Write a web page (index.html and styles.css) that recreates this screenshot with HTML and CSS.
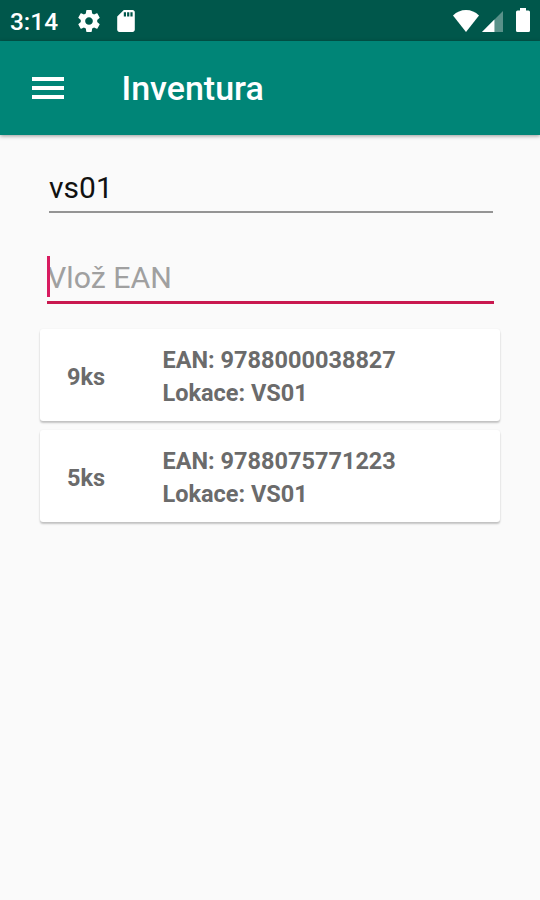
FILE: index.html
```html
<!DOCTYPE html>
<html lang="cs">
<head>
  <meta charset="UTF-8">
  <title>Inventura</title>
  <link rel="stylesheet" href="styles.css">
</head>
<body>
  <div class="status-bar">
    <span class="time">3:14</span>
    <svg class="icon-gear" viewBox="2 2 20 20" fill="#fff"><path d="M19.43 12.98c.04-.32.07-.64.07-.98s-.03-.66-.07-.98l2.11-1.65c.19-.15.24-.42.12-.64l-2-3.46c-.12-.22-.39-.3-.61-.22l-2.49 1c-.52-.4-1.08-.73-1.69-.98l-.38-2.65C14.46 2.18 14.25 2 14 2h-4c-.25 0-.46.18-.49.42l-.38 2.65c-.61.25-1.17.59-1.69.98l-2.49-1c-.23-.09-.49 0-.61.22l-2 3.46c-.13.22-.07.49.12.64l2.11 1.65c-.04.32-.07.65-.07.98s.03.66.07.98l-2.11 1.65c-.19.15-.24.42-.12.64l2 3.46c.12.22.39.3.61.22l2.49-1c.52.4 1.08.73 1.69.98l.38 2.65c.03.24.24.42.49.42h4c.25 0 .46-.18.49-.42l.38-2.65c.61-.25 1.17-.59 1.69-.98l2.49 1c.23.09.49 0 .61-.22l2-3.46c.12-.22.07-.49-.12-.64l-2.11-1.65zM12 15.5c-1.93 0-3.5-1.57-3.5-3.5s1.57-3.5 3.5-3.5 3.5 1.57 3.5 3.5-1.57 3.5-3.5 3.5z"/></svg>
    <svg class="icon-sd" viewBox="4 2 16 20" fill="#fff"><path d="M18 2h-8L4.02 8 4 20c0 1.100.9 2 2 2h12c1.100 0 2-.9 2-2V4c0-1.100-.9-2-2-2zm-6 6h-2V4h2v4zm3 0h-2V4h2v4zm3 0h-2V4h2v4z"/></svg>
    <div class="status-right">
      <svg class="icon-wifi" viewBox="0 0 26 22" fill="#fff"><path d="M13 22L0 5.500Q5.500 0 13 0T26 5.500z"/></svg>
      <svg class="icon-signal" viewBox="0 0 22 22" fill="#fff"><path d="M0 22L22 0v22z" fill-opacity=".35"/><path d="M0 22L13 9v13z"/></svg>
      <svg class="icon-battery" viewBox="0 0 14 24" fill="#fff"><path d="M4 0h6v2.500h2.500Q14 2.500 14 4v18.500q0 1.500-1.500 1.500h-11Q0 24 0 22.500V4q0-1.500 1.500-1.500H4z"/></svg>
    </div>
  </div>

  <div class="toolbar">
    <div class="menu-btn">
      <span></span>
      <span></span>
      <span></span>
    </div>
    <h1>Inventura</h1>
  </div>

  <div class="content">
    <div class="field">vs01</div>
    <div class="field active"><span class="caret"></span>Vlož EAN</div>

    <div class="list">
      <div class="card">
        <div class="count">9ks</div>
        <div class="info">
          <div>EAN: 9788000038827</div>
          <div>Lokace: VS01</div>
        </div>
      </div>
      <div class="card">
        <div class="count">5ks</div>
        <div class="info">
          <div>EAN: 9788075771223</div>
          <div>Lokace: VS01</div>
        </div>
      </div>
    </div>
  </div>
</body>
</html>
```

FILE: styles.css
```css
* {
  box-sizing: border-box;
}

body {
  margin: 0;
  min-height: 100vh;
  background: #fafafa;
  font-family: Roboto, sans-serif;
  overflow: hidden;
}

.status-bar {
  display: flex;
  align-items: center;
  height: 41px;
  padding: 1px 10px 0;
  background: #00574b;
  color: #fff;
}

.time {
  width: 67.5px;
  padding-top: 1px;
  font-size: 24.4px;
  font-weight: 500;
}

.icon-gear {
  width: 22px;
  height: 22px;
  margin-right: 17px;
}

.icon-sd {
  width: 18px;
  height: 22px;
}

.status-right {
  display: flex;
  align-items: flex-end;
  height: 24px;
  margin: 0 0 2px auto;
}

.icon-wifi {
  width: 26px;
  height: 22px;
  margin-right: 3px;
}

.icon-signal {
  width: 21px;
  height: 21px;
  margin-right: 13px;
}

.icon-battery {
  width: 14px;
  height: 24px;
}

.toolbar {
  display: flex;
  align-items: center;
  height: 94px;
  padding-left: 32px;
  background: #008577;
  box-shadow: 0 1px 4px rgba(0, 0, 0, 0.4);
}

.menu-btn {
  display: flex;
  flex-direction: column;
  gap: 5px;
  width: 32px;
  margin-right: 57.5px;
}

.menu-btn span {
  height: 4px;
  background: #fff;
}

.toolbar h1 {
  margin: 0;
  color: #fff;
  font-size: 34px;
  font-weight: 500;
}

.content {
  padding: 34px 40px 0;
}

.field {
  height: 44px;
  margin: 0 7px 0 9px;
  border-bottom: 2px solid #949494;
  color: #111;
  font-size: 30px;
  line-height: 38px;
}

.field.active {
  position: relative;
  height: 48px;
  margin: 43px 6px 0 7px;
  border-bottom: 3px solid #c9184f;
  color: #a0a0a0;
  font-size: 30.3px;
  line-height: 44px;
}

.caret {
  position: absolute;
  top: 0;
  left: 0;
  width: 3px;
  height: 41px;
  background: #d81b60;
}

.list {
  display: flex;
  flex-direction: column;
  gap: 9px;
  margin-top: 25px;
}

.card {
  display: flex;
  align-items: center;
  height: 92px;
  padding: 4px 27px 0;
  background: #fff;
  border-radius: 3px;
  box-shadow: 0 2px 2px rgba(0, 0, 0, 0.22), 0 0 2px rgba(0, 0, 0, 0.06);
  color: #6b6b6b;
  font-size: 23.5px;
  font-weight: 700;
  line-height: 33px;
}

.count {
  width: 95.5px;
}
```
